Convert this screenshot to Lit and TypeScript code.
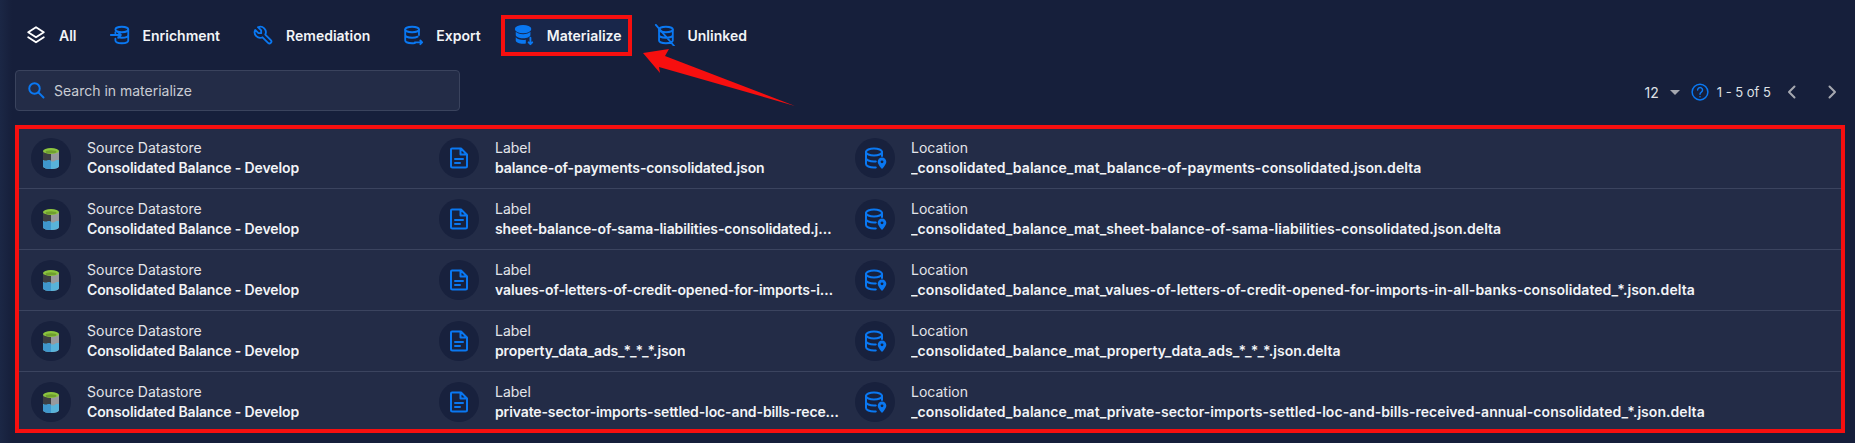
import { LitElement, css, html, svg } from 'lit';
import { customElement } from 'lit/decorators.js';

const BLUE = '#0a78f2';

const dbBody = svg`<ellipse cx="11" cy="6" rx="7.500" ry="3"/><path d="M3.500 6v12c0 1.700 3.400 3 7.500 3 1 0 2-.1 3-.2M18.500 6v6M3.500 12c0 1.700 3.400 3 7.500 3 2.500 0 4.800-.5 6.100-1.200"/>`;

const icons = {
  layers: svg`<path d="M12 3.500 20.500 9 12 14.500 3.500 9z" stroke="#fff"/><path d="M3.500 14.500 12 20l8.500-5.500" stroke="#fff"/>`,
  enrich: svg`<ellipse cx="14" cy="6" rx="7" ry="3"/><path d="M7 9v1M21 6v12c0 1.700-3.100 3-7 3s-7-1.300-7-3v-2M21 12c0 1.700-3.100 3-7 3-1.500 0-3-.2-4-.6M2 12h11M10 9l3 3-3 3"/>`,
  wrench: svg`<path d="M7 10h3V7L6.500 3.500a6 6 0 0 1 8 8l6 6a2 2 0 0 1-3 3l-6-6a6 6 0 0 1-8-8z"/>`,
  exportDb: svg`${dbBody}<path d="M14 20h8M20 18l2 2-2 2"/>`,
  materialize: svg`<ellipse cx="11" cy="5.500" rx="8" ry="3.500" fill="${BLUE}"/><path d="M3 8.500v3.500c0 2 3.600 3.500 8 3.500s8-1.500 8-3.500V8.500c-1.500 1.800-4.500 2.700-8 2.700s-6.500-.9-8-2.700z" fill="${BLUE}" stroke="none"/><path d="M3 14.500V18c0 2 3.600 3.500 8 3.500 1 0 2-.1 3-.2v-4.100c-1 .2-2 .3-3 .3-3.500 0-6.500-1-8-3z" fill="${BLUE}" stroke="none"/><path d="M19 15v7M17 20l2 2 2-2"/>`,
  unlinked: svg`<ellipse cx="13" cy="6" rx="7.500" ry="3"/><path d="M5.500 6v12c0 1.700 3.400 3 7.500 3s7.500-1.300 7.500-3V6M5.500 12c0 1.700 3.400 3 7.500 3s7.500-1.300 7.500-3M2 1l20 23"/>`,
  search: svg`<circle cx="10" cy="10" r="7"/><path d="m15.500 15.500 6.500 6.500"/>`,
  file: svg`<path d="M5 2.500h9l6 6V20a1.500 1.500 0 0 1-1.500 1.500h-13A1.500 1.500 0 0 1 4 20V3.500a1 1 0 0 1 1-1zM13.500 3v5.500H19.500M8 13h8M8 17h5"/>`,
  location: svg`<ellipse cx="11" cy="6" rx="8" ry="3.500"/><path d="M3 6v12c0 1.900 3.600 3.500 8 3.500.6 0 1.200 0 1.800-.1M19 6v4M3 12c0 1.900 3.600 3.500 8 3.500.6 0 1.200 0 1.800-.1"/><path d="M19 11.500a4.300 4.300 0 0 0-4.300 4.300c0 2.900 4.300 7.200 4.300 7.200s4.300-4.300 4.300-7.200a4.300 4.300 0 0 0-4.300-4.300z" fill="${BLUE}" stroke="none"/><circle cx="19" cy="15.800" r="1.400" fill="#18213d" stroke="none"/>`,
};

const tabs = [
  { name: 'All', icon: icons.layers },
  { name: 'Enrichment', icon: icons.enrich },
  { name: 'Remediation', icon: icons.wrench },
  { name: 'Export', icon: icons.exportDb },
  { name: 'Materialize', icon: icons.materialize, active: true },
  { name: 'Unlinked', icon: icons.unlinked },
];

const files = [
  'balance-of-payments-consolidated.json',
  'sheet-balance-of-sama-liabilities-consolidated.json',
  'values-of-letters-of-credit-opened-for-imports-in-all-banks-consolidated_*.json',
  'property_data_ads_*_*_*.json',
  'private-sector-imports-settled-loc-and-bills-received-annual-consolidated_*.json',
];

@customElement('app-root')
export class AppRoot extends LitElement {
  static styles = css`
    :host {
      display: block;
      height: 443px;
      overflow: hidden;
      box-sizing: border-box;
      padding: 11px 10px 0 15px;
      position: relative;
      background: linear-gradient(90deg, #1b2745 0, #161f3b 12px);
      color: #fff;
      font-family: Inter, 'Noto Sans', sans-serif;
    }
    .tabs {
      display: flex;
      height: 48px;
      margin-left: -6px;
    }
    .tab {
      position: relative;
      display: flex;
      align-items: center;
      gap: 10px;
      padding: 0 16px;
      font-size: 14px;
      font-weight: 600;
      color: #f2f4f7;
    }
    .tab > * {
      position: relative;
    }
    .tab.active::before {
      content: '';
      position: absolute;
      inset: 4px 6px 3px 4px;
      border: 4px solid #f70f0f;
      background: #18264a;
    }
    .icon {
      width: 24px;
      height: 24px;
      flex: none;
      fill: none;
      stroke: #0a78f2;
      stroke-width: 2;
      stroke-linecap: round;
      stroke-linejoin: round;
    }
    .tab .icon {
      width: 22px;
      height: 22px;
      margin-right: 2px;
    }
    .toolbar {
      display: flex;
      align-items: center;
      justify-content: space-between;
      margin-top: 11px;
    }
    .search {
      box-sizing: border-box;
      width: 445px;
      height: 41px;
      display: flex;
      align-items: center;
      gap: 9px;
      padding: 0 11px 1px;
      background: #232c47;
      border: 1px solid #3a435d;
      border-radius: 4px;
      font-size: 14px;
      color: #c9ccd4;
    }
    .search .icon {
      width: 18px;
      height: 18px;
      stroke-width: 2.6;
    }
    .pager {
      display: flex;
      align-items: center;
      margin: 3px 0 0;
      font-size: 13px;
      color: #dfe1e6;
    }
    .per-page {
      font-size: 14px;
    }
    .caret {
      width: 0;
      height: 0;
      margin: 1px 11px 0 11px;
      border-left: 5px solid transparent;
      border-right: 5px solid transparent;
      border-top: 5px solid #a5a8b0;
    }
    .help {
      width: 18px;
      height: 18px;
      margin-right: 8px;
    }
    .chev {
      width: 16px;
      height: 16px;
      fill: none;
      stroke: #a5a8b0;
      stroke-width: 2;
      stroke-linecap: round;
      stroke-linejoin: round;
    }
    .chev.prev {
      margin-left: 13px;
    }
    .chev.next {
      margin: 0 5px 0 24px;
    }
    .wrap {
      position: relative;
      margin-top: 14px;
      padding-top: 3px;
    }
    .wrap::before {
      content: '';
      position: absolute;
      left: 0;
      right: 0;
      top: 0;
      height: 4px;
      background: #f70f0f;
      z-index: 1;
    }
    .list {
      position: relative;
      height: 305px;
      overflow: hidden;
      background: #232c47;
    }
    .frame {
      position: absolute;
      inset: 0;
      border: 4px solid #f70f0f;
      border-top-width: 1px;
      pointer-events: none;
    }
    .row {
      box-sizing: border-box;
      height: 61px;
      display: grid;
      grid-template-columns: 408px 416px 1fr;
      align-items: center;
      padding-left: 16px;
      border-bottom: 1px solid #3b445f;
    }
    .cell {
      display: flex;
      align-items: center;
      gap: 16px;
      min-width: 0;
      padding-right: 16px;
    }
    .disc {
      width: 40px;
      height: 40px;
      flex: none;
      border-radius: 50%;
      background: #18213d;
      display: flex;
      align-items: center;
      justify-content: center;
    }
    .text {
      min-width: 0;
    }
    .lbl {
      font-size: 14px;
      line-height: 20px;
      color: #e3e5ea;
    }
    .val {
      font-size: 14px;
      font-weight: 600;
      line-height: 20px;
      color: #f2f4f7;
      white-space: nowrap;
      overflow: hidden;
      text-overflow: ellipsis;
    }
    .ds {
      letter-spacing: -0.13px;
    }
    .name {
      letter-spacing: -0.12px;
    }
    .loc {
      letter-spacing: 0.05px;
    }
    .arrow {
      position: absolute;
      left: 640px;
      top: 45px;
      width: 160px;
      height: 65px;
    }
  `;

  private icon(body: unknown) {
    return html`<svg class="icon" viewBox="0 0 24 24">${body}</svg>`;
  }

  private datastore() {
    return html`<svg width="16" height="21" viewBox="0 0 16 21">
      <path d="M0 3v15c0 1.700 3.600 3 8 3s8-1.300 8-3V3z" fill="#98999d" />
      <path d="M0 3v15c0 1.700 3.600 3 8 3V5z" fill="#3c3e43" />
      <path d="M0 12c2 1.200 3.500 1 5 .3 1-.4 2-.3 3 .7s3 .6 4-.3c1-.7 3-.6 4-.7v6c0 1.700-3.600 3-8 3s-8-1.300-8-3z" fill="#58b3da" />
      <path d="M0 12c2 1.200 3.500 1 5 .3 1-.4 2-.3 3 .7v8c-4.400 0-8-1.300-8-3z" fill="#3f97cd" />
      <ellipse cx="8" cy="3" rx="8" ry="3" fill="#8cc63f" />
      <ellipse cx="8" cy="3.800" rx="5.500" ry="1.500" fill="#6f9e2e" />
    </svg>`;
  }

  render() {
    return html`
      <div class="tabs">
        ${tabs.map(
          (t) => html`<div class="tab ${t.active ? 'active' : ''}">
            ${this.icon(t.icon)}<span>${t.name}</span>
          </div>`
        )}
      </div>

      <div class="toolbar">
        <div class="search">${this.icon(icons.search)}<span>Search in materialize</span></div>
        <div class="pager">
          <span class="per-page">12</span>
          <span class="caret"></span>
          <svg class="icon help" viewBox="0 0 24 24">
            <circle cx="12" cy="12" r="10.500" />
            <path d="M8.800 9.200a3.300 3.300 0 1 1 5 2.900c-1.200.7-1.800 1.400-1.800 2.900M12 18.200v.1" />
          </svg>
          <span>1 - 5 of 5</span>
          <svg class="chev prev" viewBox="0 0 16 16"><path d="M10.500 2.500 5 8l5.500 5.500" /></svg>
          <svg class="chev next" viewBox="0 0 16 16"><path d="M5.500 2.500 11 8l-5.500 5.500" /></svg>
        </div>
      </div>

      <div class="wrap">
        <div class="list">
          ${files.map(
            (label) => html`<div class="row">
              <div class="cell">
                <div class="disc">${this.datastore()}</div>
                <div class="text">
                  <div class="lbl">Source Datastore</div>
                  <div class="val ds">Consolidated Balance - Develop</div>
                </div>
              </div>
              <div class="cell">
                <div class="disc">${this.icon(icons.file)}</div>
                <div class="text">
                  <div class="lbl">Label</div>
                  <div class="val name">${label}</div>
                </div>
              </div>
              <div class="cell">
                <div class="disc">${this.icon(icons.location)}</div>
                <div class="text">
                  <div class="lbl">Location</div>
                  <div class="val loc">_consolidated_balance_mat_${label}.delta</div>
                </div>
              </div>
            </div>`
          )}
          <div class="frame"></div>
        </div>
      </div>

      <svg class="arrow" viewBox="640 45 160 65">
        <path d="M643 53 669 49 665 56 795 106 659 67 660 73z" fill="#f70f0f" />
      </svg>
    `;
  }
}
